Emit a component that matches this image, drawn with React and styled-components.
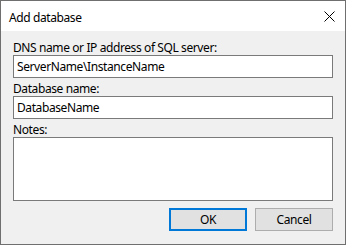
import styled, { createGlobalStyle } from "styled-components";

const Global = createGlobalStyle`
  html, body { margin: 0; padding: 0; background: #ffffff; }
  body {
    font-family: "Noto Sans", "Liberation Sans", sans-serif;
    font-size: 12px;
    letter-spacing: -0.4px;
    color: #000;
  }
`;

function App() {
  return (
    <>
      <Global />
      <Dialog.Window>
        <Dialog.TitleBar>
          <Dialog.Title>Add database</Dialog.Title>
          <Dialog.Close aria-label="Close">
            <svg width="11" height="11" viewBox="0 0 11 11">
              <path d="M0.5 0.5 L10.5 10.5 M10.5 0.5 L0.5 10.5" stroke="#000" strokeWidth="1" fill="none" />
            </svg>
          </Dialog.Close>
        </Dialog.TitleBar>
        <Dialog.Body>
          <Field.Label>DNS name or IP address of SQL server:</Field.Label>
          <Field.Input defaultValue={"ServerName\\InstanceName"} />
          <Field.Label>Database name:</Field.Label>
          <Field.Input defaultValue="DatabaseName" />
          <Field.Label>Notes:</Field.Label>
          <Field.Notes />
          <Dialog.Buttons>
            <Dialog.Button $primary>OK</Dialog.Button>
            <Dialog.Button>Cancel</Dialog.Button>
          </Dialog.Buttons>
        </Dialog.Body>
      </Dialog.Window>
    </>
  );
}

const Dialog = {
  Window: styled.div`
    width: 346px;
    height: 245px;
    box-sizing: border-box;
    border: 1px solid #6f6f6f;
    background: #f0f0f0;
    display: flex;
    flex-direction: column;
  `,
  TitleBar: styled.div`
    height: 30px;
    background: #ffffff;
    display: flex;
    align-items: center;
    justify-content: space-between;
    padding: 0 10px 0 8px;
  `,
  Title: styled.div`
    font-size: 12px;
    margin-top: 2px;
  `,
  Close: styled.div`
    width: 11px;
    height: 11px;
    display: flex;
  `,
  Body: styled.div`
    flex: 1;
    display: flex;
    flex-direction: column;
    padding: 10px 12px 0 12px;
  `,
  Buttons: styled.div`
    display: flex;
    justify-content: flex-end;
    gap: 8px;
    margin-top: 7px;
  `,
  Button: styled.button`
    width: 78px;
    height: 23px;
    box-sizing: border-box;
    font-family: inherit;
    font-size: 12px;
    letter-spacing: inherit;
    color: #000;
    background: #e1e1e1;
    border: ${(p) => (p.$primary ? "2px solid #0078d7" : "1px solid #adadad")};
    padding: 0;
    border-radius: 0;
  `,
};

const Field = {
  Label: styled.div`
    font-size: 12px;
    line-height: 13px;
    margin-bottom: 1px;
  `,
  Input: styled.input`
    height: 23px;
    box-sizing: border-box;
    border: 1px solid #7a7a7a;
    background: #fff;
    font-family: inherit;
    font-size: 12px;
    letter-spacing: inherit;
    padding: 0 3px;
    margin: 0 0 4px 0;
    outline: none;
    width: 100%;
  `,
  Notes: styled.textarea`
    height: 64px;
    box-sizing: border-box;
    border: 1px solid #7a7a7a;
    background: #fff;
    resize: none;
    margin: 0;
    outline: none;
    width: 100%;
  `,
};

export default App;
